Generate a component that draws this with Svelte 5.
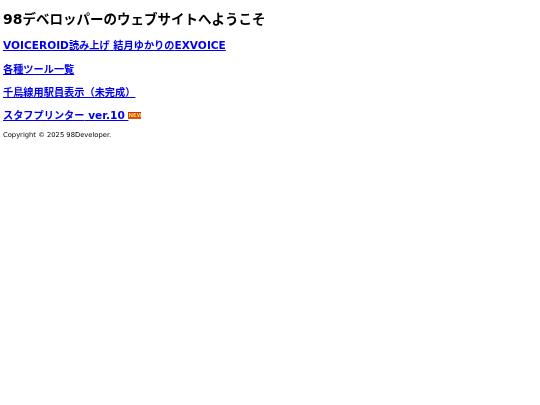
<script lang="ts">
  const links = [
    { text: 'VOICEROID読み上げ 結月ゆかりのEXVOICE' },
    { text: '各種ツール一覧' },
    { text: '千鳥線用駅員表示（未完成）' },
    { text: 'スタフプリンター ver.10 ', isNew: true }
  ];

  // latin runs sit slightly larger than the kana/kanji next to them
  const runs = (text: string) => text.match(/[\x20-\x7e]+|[^\x20-\x7e]+/g) ?? [];
  const isLatin = (run: string) => /^[\x20-\x7e]/.test(run);
</script>

<main class="page">
  <h1><span class="num">98</span>デベロッパーのウェブサイトへようこそ</h1>
  {#each links as link}
    <h2>
      <a href="#top">{#each runs(link.text) as run}<span class:latin={isLatin(run)}>{run}</span>{/each}</a>{#if link.isNew}<span class="new">NEW</span>{/if}
    </h2>
  {/each}
  <p class="copy">Copyright © 2025 98Developer.</p>
</main>

<style>
  :global(body) {
    margin: 0;
    background: #fff;
  }
  .page {
    padding: 3px 3px 0;
    font-family: "DejaVu Sans", "Noto Sans CJK JP", sans-serif;
    color: #000;
    filter: blur(0.3px);
  }
  h1 {
    margin: 8px 0 0;
    font-size: 13.5px;
    line-height: 16px;
    font-weight: bold;
  }
  .num {
    font-size: 14px;
  }
  h2 {
    margin: 10.3px 0 0;
    font-size: 10.2px;
    line-height: 13px;
    font-weight: bold;
  }
  h1 + h2 {
    margin-top: 12.3px;
  }
  .latin {
    font-size: 10.6px;
  }
  a {
    color: #0000ee;
    white-space: pre;
  }
  .new {
    display: inline-block;
    width: 13px;
    height: 7px;
    background: linear-gradient(#c83000, #e05800);
    color: #ffd870;
    font-size: 5.5px;
    line-height: 7px;
    text-align: center;
    font-weight: bold;
    overflow: hidden;
  }
  .copy {
    margin: 9px 0 0;
    font-size: 6.75px;
    line-height: 9px;
  }
</style>
